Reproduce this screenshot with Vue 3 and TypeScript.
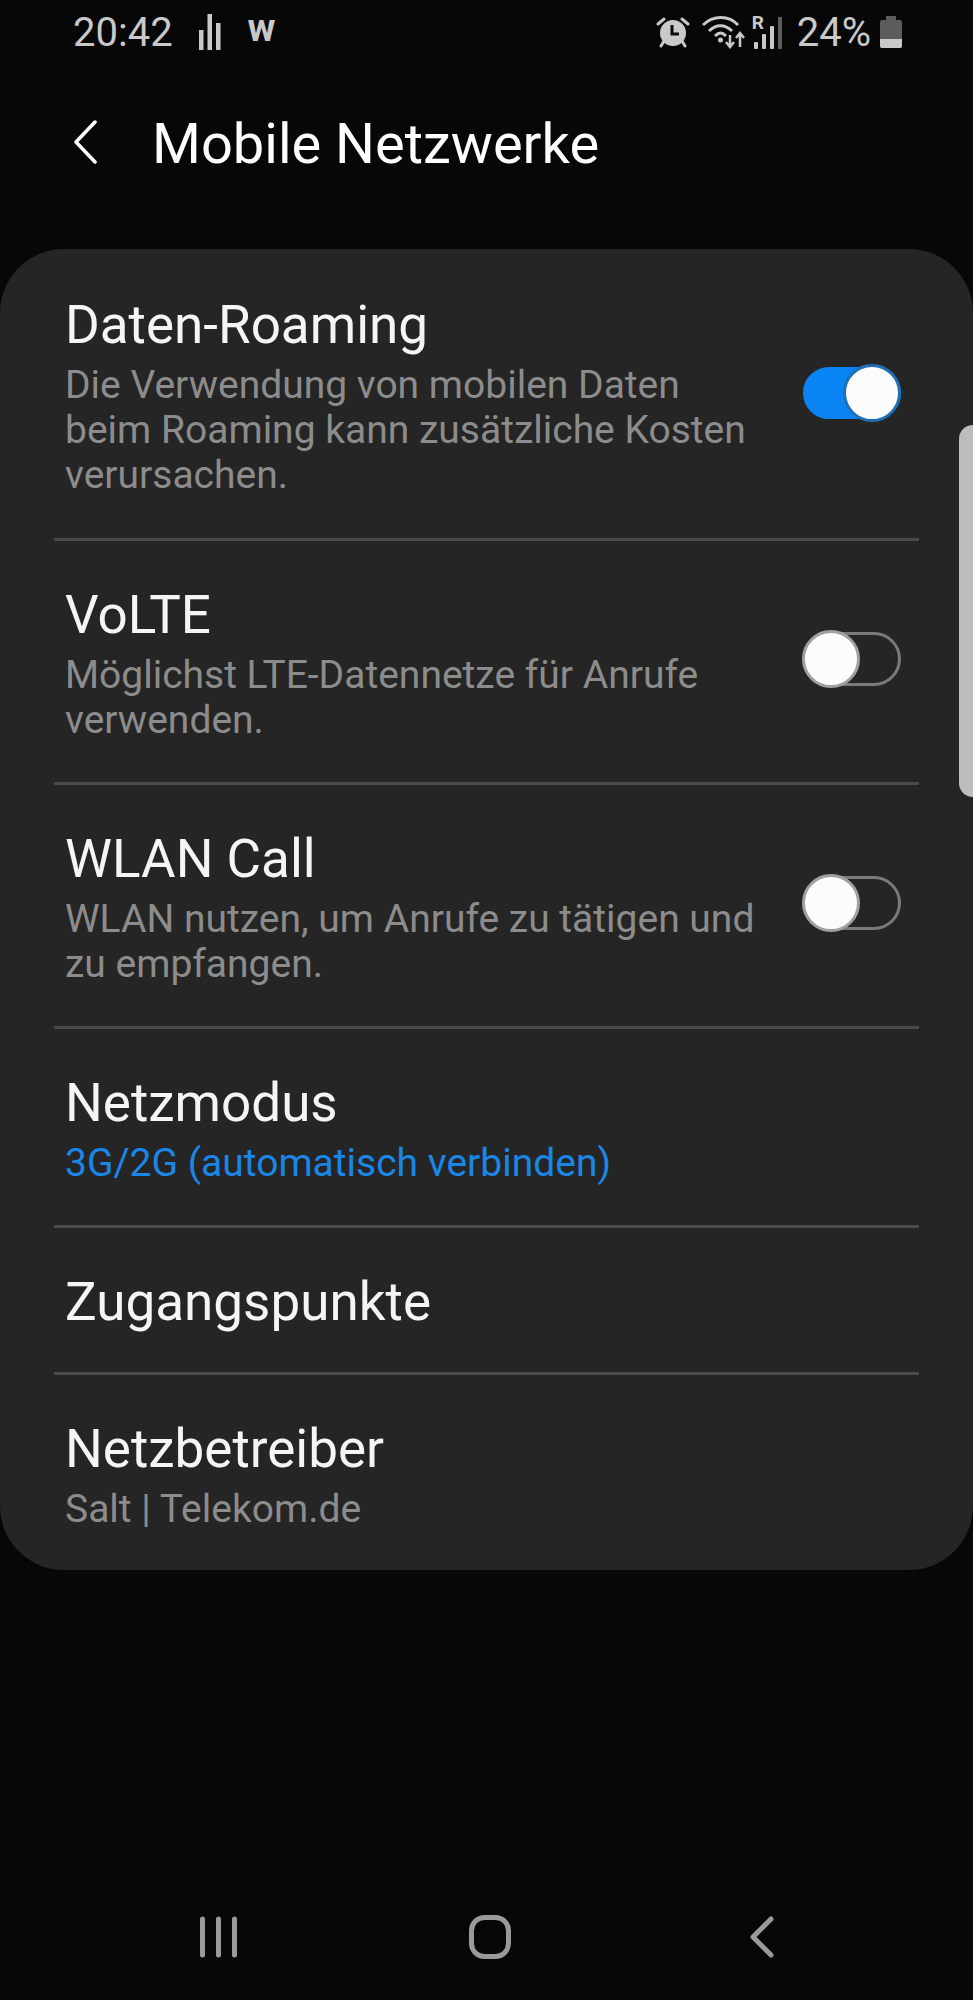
<template>
  <div class="screen">
    <div class="status-bar">
      <div class="status-left">
        <span class="clock">20:42</span>
        <svg class="ic-bars" viewBox="0 0 22 36" fill="#c9c9c9">
          <rect x="0" y="16" width="4.500" height="20" />
          <rect x="8.500" y="0" width="4.500" height="36" />
          <rect x="17" y="9" width="4.500" height="27" />
        </svg>
        <span class="w-badge">w</span>
      </div>
      <div class="status-right">
        <svg class="ic-alarm" viewBox="0 0 34 32">
          <path d="M2 8 8 3M32 8 26 3" stroke="#c9c9c9" stroke-width="3" stroke-linecap="round" />
          <path d="M8 25 5 30M26 25 29 30" stroke="#c9c9c9" stroke-width="3" stroke-linecap="round" />
          <circle cx="17" cy="17" r="13" fill="#c9c9c9" />
          <path d="M16 9v9h7" fill="none" stroke="#0a0a0a" stroke-width="3" />
        </svg>
        <svg class="ic-wifi" viewBox="0 0 44 34" fill="none">
          <path d="M1 10C11 0 27 0 36 10" stroke="#c9c9c9" stroke-width="3" />
          <path d="M7 16C14 9 23 9 30 16" stroke="#c9c9c9" stroke-width="3" />
          <path d="M13 21C17 17 20 17 24 21" stroke="#c9c9c9" stroke-width="3" />
          <circle cx="18.500" cy="25" r="2.500" fill="#c9c9c9" />
          <path d="M28 20v12M24 27l4 5 4-5" stroke="#c9c9c9" stroke-width="2.500" />
          <path d="M38 32V18M34 23l4-5 4 5" stroke="#c9c9c9" stroke-width="2.500" />
        </svg>
        <div class="signal">
          <span class="roam">R</span>
          <svg viewBox="0 0 28 32" fill="#c9c9c9">
            <rect x="0" y="25" width="4" height="7" rx="1" />
            <rect x="8" y="17" width="4" height="15" rx="1" />
            <rect x="16" y="9" width="4" height="23" rx="1" />
            <rect x="24" y="0" width="4" height="32" fill="#5c5c5c" />
          </svg>
        </div>
        <span class="percent">24%</span>
        <div class="battery">
          <div class="battery-cap"></div>
          <div class="battery-body">
            <div class="battery-level"></div>
          </div>
        </div>
      </div>
    </div>

    <header class="app-bar">
      <svg class="back" viewBox="0 0 24 44" fill="none">
        <path d="M22 2 3 22l19 20" stroke="#fff" stroke-width="3.500" stroke-linecap="round" stroke-linejoin="round" />
      </svg>
      <h1 class="page-title">Mobile Netzwerke</h1>
    </header>

    <section class="card">
      <div class="scrollbar"></div>
      <div v-for="row in rows" :key="row.title" class="row">
        <div class="row-text">
          <div class="row-title">{{ row.title }}</div>
          <div v-if="row.sub" class="row-sub" :class="{ accent: row.accent }">{{ row.sub }}</div>
        </div>
        <div v-if="row.toggle" class="switch" :class="{ on: row.toggle === 'on' }">
          <div class="knob"></div>
        </div>
      </div>
    </section>

    <nav class="nav-bar">
      <svg class="nav-recent" viewBox="0 0 37 42" fill="none">
        <path d="M2.500 3v36M18.500 3v36M34.500 3v36" stroke="#9a9a9a" stroke-width="5" stroke-linecap="round" />
      </svg>
      <svg class="nav-home" viewBox="0 0 42 44" fill="none">
        <rect x="2.500" y="2.500" width="37" height="39" rx="13" stroke="#9a9a9a" stroke-width="5" />
      </svg>
      <svg class="nav-back" viewBox="0 0 24 42" fill="none">
        <path d="M21 3 3 21l18 18" stroke="#9a9a9a" stroke-width="5" stroke-linecap="round" stroke-linejoin="round" />
      </svg>
    </nav>
  </div>
</template>

<script setup lang="ts">
interface Row {
  title: string
  sub?: string
  accent?: boolean
  toggle?: 'on' | 'off'
}

const rows: Row[] = [
  {
    title: 'Daten-Roaming',
    sub: 'Die Verwendung von mobilen Daten beim Roaming kann zusätzliche Kosten verursachen.',
    toggle: 'on',
  },
  {
    title: 'VoLTE',
    sub: 'Möglichst LTE-Datennetze für Anrufe verwenden.',
    toggle: 'off',
  },
  {
    title: 'WLAN Call',
    sub: 'WLAN nutzen, um Anrufe zu tätigen und zu empfangen.',
    toggle: 'off',
  },
  { title: 'Netzmodus', sub: '3G/2G (automatisch verbinden)', accent: true },
  { title: 'Zugangspunkte' },
  { title: 'Netzbetreiber', sub: 'Salt | Telekom.de' },
]
</script>

<style>
html,
body {
  background: #070707;
}
</style>

<style scoped>
.screen {
  width: 973px;
  height: 2000px;
  background: #070707;
  font-family: Roboto, "Liberation Sans", sans-serif;
  display: flex;
  flex-direction: column;
  overflow: hidden;
}

.status-bar {
  height: 64px;
  padding: 0 71px 0 73px;
  display: flex;
  justify-content: space-between;
  align-items: center;
  color: #c9c9c9;
}

.status-left,
.status-right {
  display: flex;
  align-items: center;
}

.clock {
  font-size: 40px;
}

.ic-bars {
  width: 22px;
  height: 36px;
  margin-left: 26px;
}

.w-badge {
  font-size: 38px;
  font-weight: 700;
  line-height: 1;
  margin-left: 27px;
  margin-top: -8px;
}

.ic-alarm {
  width: 34px;
  height: 32px;
}

.ic-wifi {
  width: 44px;
  height: 34px;
  margin-left: 12px;
}

.signal {
  position: relative;
  width: 30px;
  height: 32px;
  margin-left: 6px;
}

.signal svg {
  position: absolute;
  left: 2px;
  bottom: -1px;
  width: 28px;
  height: 32px;
}

.roam {
  position: absolute;
  left: 0;
  top: -3px;
  font-size: 19px;
  font-weight: 700;
  line-height: 1;
}

.percent {
  font-size: 40px;
  margin-left: 15px;
}

.battery {
  width: 22px;
  margin-left: 9px;
}

.battery-cap {
  width: 10px;
  height: 4px;
  margin: 0 auto;
  background: #5c5c5c;
}

.battery-body {
  height: 28px;
  background: #5c5c5c;
  border-radius: 2px;
  display: flex;
  align-items: flex-end;
  overflow: hidden;
}

.battery-level {
  width: 100%;
  height: 9px;
  background: #c9c9c9;
}

.app-bar {
  height: 185px;
  padding: 0 0 26px 73px;
  box-sizing: border-box;
  display: flex;
  align-items: center;
}

.back {
  width: 24px;
  height: 44px;
  margin-bottom: 4px;
}

.page-title {
  margin: 0 0 0 55px;
  font-size: 56px;
  font-weight: 400;
  color: #fff;
}

.card {
  position: relative;
  height: 1321px;
  background: #252525;
  border-radius: 64px;
  box-sizing: border-box;
  padding: 0 54px;
}

.scrollbar {
  position: absolute;
  right: 0;
  top: 176px;
  width: 14px;
  height: 372px;
  background: #bdbdbd;
  border-radius: 14px 0 0 14px;
}

.row {
  display: flex;
  align-items: center;
  justify-content: space-between;
  padding: 39px 18px 39px 11px;
  border-bottom: 3px solid #4a4a4a;
}

.scrollbar + .row {
  padding-top: 41px;
  padding-bottom: 40px;
}

.row:last-child {
  border-bottom: 0;
}

.row-text {
  padding-top: 4px;
}

.row-title {
  font-size: 53px;
  line-height: 62px;
  color: #f5f5f5;
}

.row-sub {
  margin-top: 7px;
  max-width: 690px;
  font-size: 39px;
  line-height: 45px;
  color: #8c8c8c;
}

.row-sub.accent {
  color: #1a86e6;
}

.switch {
  position: relative;
  width: 98px;
  height: 54px;
  margin-top: -5px;
  box-sizing: border-box;
  border: 3px solid #7a7a7a;
  border-radius: 27px;
}

.switch.on {
  height: 52px;
  margin-top: -2px;
  background: #0a84f5;
  border-color: #0a84f5;
}

.knob {
  position: absolute;
  left: -4px;
  top: -5px;
  width: 58px;
  height: 58px;
  box-sizing: border-box;
  background: #fcfcfc;
  border: 3px solid #a0a0a0;
  border-radius: 50%;
}

.switch.on .knob {
  left: auto;
  right: -3px;
  top: -6px;
  border-color: #1f6fb5;
}

.nav-bar {
  flex: 1;
  padding-left: 82px;
  display: grid;
  grid-template-columns: repeat(3, 272px);
  align-items: end;
  justify-items: center;
}

.nav-recent {
  width: 37px;
  height: 42px;
  margin-bottom: 42px;
}

.nav-home {
  width: 42px;
  height: 44px;
  margin-bottom: 41px;
}

.nav-back {
  width: 24px;
  height: 42px;
  margin-bottom: 42px;
}
</style>
